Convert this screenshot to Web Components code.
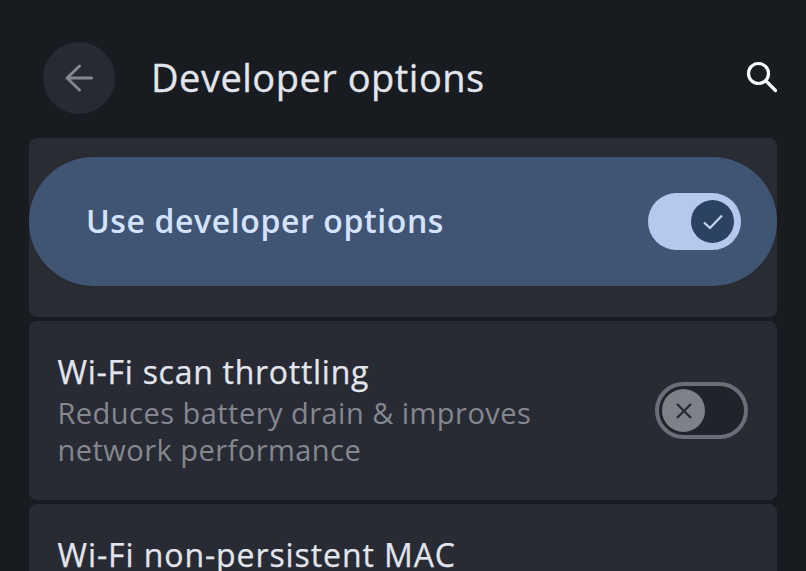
<!doctype html>
<html><head><meta charset="utf-8"><style>
html,body{margin:0;height:571px;overflow:hidden;background:#181b20}
</style></head><body>
<settings-page>
<settings-header title="Developer options"></settings-header>
<settings-card variant="main"><main-switch>Use developer options</main-switch></settings-card>
<settings-card><setting-row title="Wi-Fi scan throttling" desc="Reduces battery drain &amp; improves network performance"></setting-row></settings-card>
<settings-card><setting-row title="Wi-Fi non-persistent MAC"></setting-row></settings-card>
</settings-page>
<script>
const F='"Open Sans","Noto Sans",sans-serif';
class Base extends HTMLElement{
  render(css,html){this.attachShadow({mode:'open'}).innerHTML=`<style>${css}</style>${html}`;}
}
customElements.define('settings-page',class extends Base{connectedCallback(){if(this.shadowRoot)return;
  this.render(`:host{display:flex;flex-direction:column;gap:4px;height:571px;overflow:hidden;box-sizing:border-box;padding:0 29px}`,`<slot></slot>`);}});
customElements.define('settings-header',class extends Base{connectedCallback(){if(this.shadowRoot)return;
  this.render(`:host{display:flex;flex:none;align-items:center;box-sizing:border-box;height:134px;padding:21px 0 0 14px}
  .back{width:72px;height:72px;border-radius:50%;background:#272a33;display:grid;place-items:center;flex:none}
  h1{margin:-2px 0 0 36px;flex:1;font:400 38px/44px ${F};letter-spacing:.5px;-webkit-text-stroke:.3px #e3e5ec;color:#e3e5ec;white-space:nowrap}
  svg{display:block;flex:none}`,
  `<div class="back"><svg width="32" height="32" viewBox="0 0 32 32" fill="none" stroke="#85878f" stroke-width="3" stroke-linecap="round" stroke-linejoin="round"><path d="M4 16H28.500M16.500 4L4 16L16.500 28"/></svg></div>
  <h1>${this.getAttribute('title')}</h1>
  <svg width="34" height="34" viewBox="0 0 34 34" fill="none" stroke="#fff" stroke-width="3.2" stroke-linecap="round"><circle cx="15.500" cy="12.500" r="10"/><path d="M22.500 19.500L32.500 29.500"/></svg>`);}});
customElements.define('settings-card',class extends Base{connectedCallback(){if(this.shadowRoot)return;
  const main=this.getAttribute('variant')==='main';
  this.render(`:host{display:block;box-sizing:border-box;background:${main?'#2a2c33':'#282b34'};border-radius:8px;height:179px;flex:none;padding:${main?'19px 0 31px':'0'}}`,`<slot></slot>`);}});
customElements.define('main-switch',class extends Base{connectedCallback(){if(this.shadowRoot)return;
  this.render(`:host{display:flex;align-items:center;justify-content:space-between;height:129px;box-sizing:border-box;border-radius:65px;background:#405473;padding:0 36px 0 57px}
  span{font:600 32px/40px ${F};letter-spacing:.6px;color:#d3e3fd;white-space:nowrap;margin-top:-2px}
  .track{width:93px;height:57px;border-radius:29px;background:#b5c8ed;display:flex;align-items:center;justify-content:flex-end;padding-right:7px;box-sizing:border-box}
  .thumb{width:43px;height:43px;border-radius:50%;background:#2c4263;display:grid;place-items:center}
  svg{display:block}`,
  `<span><slot></slot></span><div class="track"><div class="thumb"><svg width="20" height="16" viewBox="0 0 20 16" fill="none" stroke="#c6d6f2" stroke-width="2.200"><path d="M1 8.500L7 14L19 1.500"/></svg></div></div>`);}});
customElements.define('setting-row',class extends Base{connectedCallback(){if(this.shadowRoot)return;
  const d=this.getAttribute('desc');
  this.render(`:host{display:flex;justify-content:space-between;align-items:flex-start;padding:30px 29px 0 28.500px}
  .t{font:400 32px/42px ${F};letter-spacing:${d?.72:.9}px;-webkit-text-stroke:.25px #e3e5ec;color:#e3e5ec;white-space:nowrap}
  .d{font:400 29px/37px ${F};letter-spacing:.47px;color:#85878f;width:540px;margin-top:1px}
  .track{width:93px;height:57px;border-radius:29px;border:4px solid #6b6e78;background:#20232b;box-sizing:border-box;margin-top:31px;display:flex;align-items:center;padding-left:3px}
  .thumb{width:43px;height:43px;border-radius:50%;background:#7f8189;display:grid;place-items:center}
  svg{display:block}`,
  `<div><div class="t">${this.getAttribute('title')}</div>${d?`<div class="d">${d}</div>`:''}</div>
  ${d?`<div class="track"><div class="thumb"><svg width="18" height="18" viewBox="0 0 18 18" fill="none" stroke="#282a33" stroke-width="2.400"><path d="M2 2L16 16M16 2L2 16"/></svg></div></div>`:''}`);}});
</script>
</body></html>
